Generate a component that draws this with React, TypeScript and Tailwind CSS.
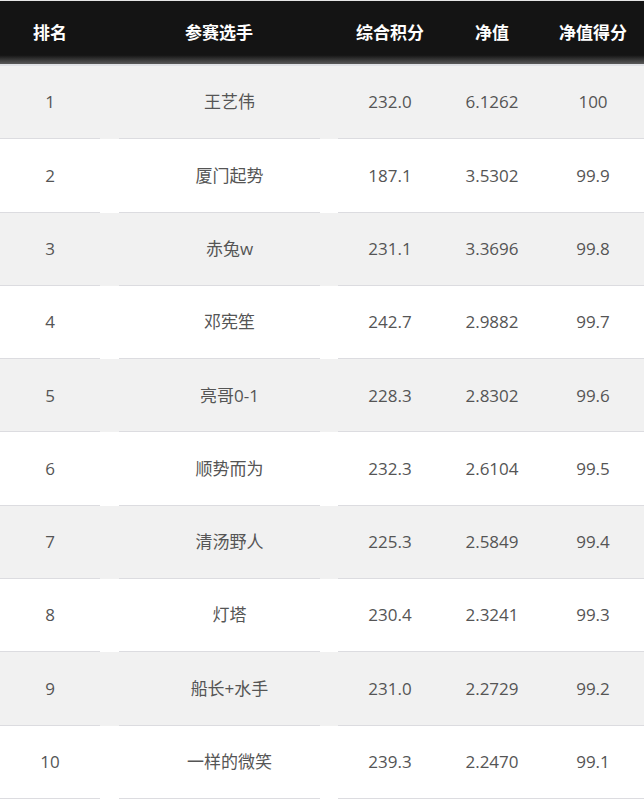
import React from "react";

const rows = [
  { rank: 1, name: "王艺伟", score: "232.0", nav: "6.1262", navScore: "100" },
  { rank: 2, name: "厦门起势", score: "187.1", nav: "3.5302", navScore: "99.9" },
  { rank: 3, name: "赤兔w", score: "231.1", nav: "3.3696", navScore: "99.8" },
  { rank: 4, name: "邓宪笙", score: "242.7", nav: "2.9882", navScore: "99.7" },
  { rank: 5, name: "亮哥0-1", score: "228.3", nav: "2.8302", navScore: "99.6" },
  { rank: 6, name: "顺势而为", score: "232.3", nav: "2.6104", navScore: "99.5" },
  { rank: 7, name: "清汤野人", score: "225.3", nav: "2.5849", navScore: "99.4" },
  { rank: 8, name: "灯塔", score: "230.4", nav: "2.3241", navScore: "99.3" },
  { rank: 9, name: "船长+水手", score: "231.0", nav: "2.2729", navScore: "99.2" },
  { rank: 10, name: "一样的微笑", score: "239.3", nav: "2.2470", navScore: "99.1" },
];

const App = () => {
  return (
    <div
      className="w-[644px] bg-white text-[17px]"
      style={{ fontFamily: '"Open Sans", "Noto Sans CJK SC", sans-serif' }}>
      {/* header */}
      <div className="border-t border-[#e6e6e6]">
        <div className="grid grid-cols-[100px_238px_104px_100px_102px] h-[63px] items-center bg-[linear-gradient(to_bottom,#141414_86%,#5a5a5a_100%)] text-white font-bold">
          <div className="text-center">排名</div>
          <div className="text-center">参赛选手</div>
          <div className="text-center">综合积分</div>
          <div className="text-center">净值</div>
          <div className="text-center">净值得分</div>
        </div>
        <div className="h-[2px] bg-[#e0e2e6]" />
      </div>

      {/* rows */}
      <div>
        {rows.map((row, index) => (
          <div
            key={row.rank}
            className={`flex h-[73.3px] text-[#555] ${index % 2 === 0 ? "bg-[#f1f1f1]" : "bg-white"}`}>
            <div className="w-[100px] flex items-center justify-center border-b border-[#dcdce0]">
              {row.rank}
            </div>
            <div className="ml-[19px] w-[201px] pl-[20px] flex items-center justify-center border-b border-[#dcdce0]">
              {row.name}
            </div>
            <div className="ml-[18px] flex-1 grid grid-cols-[104px_100px_102px] items-center border-b border-[#dcdce0]">
              <div className="text-center">{row.score}</div>
              <div className="text-center">{row.nav}</div>
              <div className="text-center">{row.navScore}</div>
            </div>
          </div>
        ))}
      </div>
    </div>
  );
};

export default App;
